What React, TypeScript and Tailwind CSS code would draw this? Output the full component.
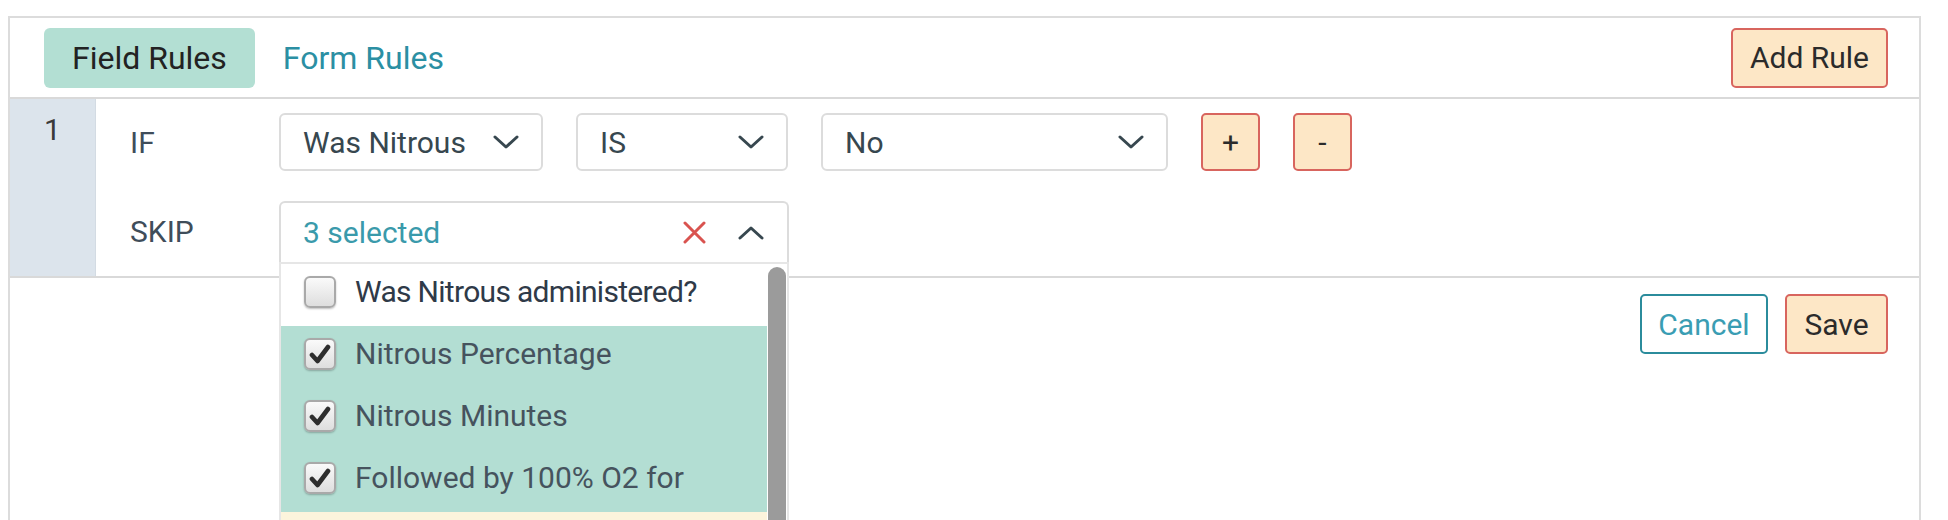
import React from "react";

function ChevronDown() {
  return (
    <svg width="26" height="14" viewBox="0 0 26 14" fill="none">
      <path d="M2 2L13 12L24 2" stroke="#37474f" strokeWidth="3" strokeLinecap="round" strokeLinejoin="round" />
    </svg>
  );
}

function ChevronUp() {
  return (
    <svg width="26" height="14" viewBox="0 0 26 14" fill="none">
      <path d="M2 12L13 2L24 12" stroke="#37474f" strokeWidth="3" strokeLinecap="round" strokeLinejoin="round" />
    </svg>
  );
}

function XIcon() {
  return (
    <svg width="23" height="23" viewBox="0 0 23 23" fill="none">
      <path d="M2 2L21 21M21 2L2 21" stroke="#d9534f" strokeWidth="3" strokeLinecap="round" />
    </svg>
  );
}

function Check() {
  return (
    <svg width="22" height="20" viewBox="0 0 22 20" fill="none">
      <path d="M3 11L8.5 17L19 3" stroke="#2e2e2e" strokeWidth="4.6" strokeLinecap="round" strokeLinejoin="round" />
    </svg>
  );
}

function Checkbox({ checked }: { checked: boolean }) {
  return (
    <div className="flex h-[32px] w-[32px] shrink-0 items-center justify-center rounded-[6px] border-2 border-[#a9a9a9] bg-gradient-to-b from-[#fafafa] to-[#dedede] shadow-[0_1px_2px_rgba(0,0,0,0.25)]">
      {checked && <Check />}
    </div>
  );
}

function Select({ label, w }: { label: string; w: string }) {
  return (
    <div
      className={`flex h-[58px] ${w} items-center justify-between rounded-[6px] border-2 border-[#dcdcdc] bg-white px-[22px] text-[30px] text-[#37474f]`}
    >
      <span>{label}</span>
      <ChevronDown />
    </div>
  );
}

function PeachButton({ children, w }: { children: React.ReactNode; w: string }) {
  return (
    <div
      className={`flex h-[60px] ${w} items-center justify-center rounded-[5px] border-2 border-[#d8655e] bg-[#fde7c6] text-[30px] text-[#2b2b2b]`}
    >
      {children}
    </div>
  );
}

export default function App() {
  const items = [
    { label: "Was Nitrous administered?", checked: false, bg: "bg-white", color: "text-[#2f3a48] tracking-[-0.7px]" },
    { label: "Nitrous Percentage", checked: true, bg: "bg-[#b3ded3]", color: "text-[#46535e]" },
    { label: "Nitrous Minutes", checked: true, bg: "bg-[#b3ded3]", color: "text-[#46535e]" },
    { label: "Followed by 100% O2 for", checked: true, bg: "bg-[#b3ded3]", color: "text-[#46535e]" },
    { label: "", checked: false, bg: "bg-[#fcf4dc]", color: "text-[#46535e]" },
  ];

  return (
    <div className="min-h-[520px] overflow-hidden bg-white font-['Roboto',sans-serif] pt-[16px] pl-[8px]">
      <div className="h-[560px] w-[1913px] border-2 border-[#dcdcdc]">
        {/* Header */}
        <div className="flex h-[81px] items-center justify-between border-b-2 border-[#d9d9d9] pl-[34px] pr-[31px]">
          <div className="flex items-center">
            <div className="flex h-[60px] items-center rounded-[6px] bg-[#b3dfd3] px-[28px] text-[32px] text-[#222]">
              Field Rules
            </div>
            <div className="flex h-[60px] items-center px-[28px] text-[32px] text-[#2b8fa3]">Form Rules</div>
          </div>
          <PeachButton w="w-[157px]">Add Rule</PeachButton>
        </div>

        {/* Rule row */}
        <div className="flex border-b-2 border-[#d9d9d9]">
          <div className="flex w-[86px] justify-center border-r border-[#d3dbe3] bg-[#dce4ec] pt-[13px] text-[30px] leading-[36px] text-[#3a3a3a]">
            1
          </div>
          <div className="flex flex-col gap-[30px] pl-[34px] pt-[14px] pb-[14px]">
            <div className="flex items-center gap-[33px]">
              <div className="w-[116px] text-[30px] text-[#3f4d5a]">IF</div>
              <Select label="Was Nitrous" w="w-[264px]" />
              <Select label="IS" w="w-[212px]" />
              <Select label="No" w="w-[347px]" />
              <div className="flex h-[58px] w-[59px] items-center justify-center rounded-[5px] border-2 border-[#d8655e] bg-[#fde7c6] text-[30px] text-[#2b2b2b]">
                +
              </div>
              <div className="flex h-[58px] w-[59px] items-center justify-center rounded-[5px] border-2 border-[#d8655e] bg-[#fde7c6] text-[30px] text-[#2b2b2b]">
                -
              </div>
            </div>
            <div className="flex items-center gap-[33px]">
              <div className="w-[116px] text-[30px] text-[#3f4d5a]">SKIP</div>
              <div className="relative w-[510px]">
                <div className="flex h-[61px] items-center justify-between rounded-t-[6px] border-2 border-b-0 border-[#dcdcdc] bg-white pl-[22px] pr-[23px] text-[30px] text-[#3a9aab]">
                  <span>3 selected</span>
                  <div className="flex items-center gap-[32px]">
                    <XIcon />
                    <ChevronUp />
                  </div>
                </div>
                <div className="absolute left-0 top-[61px] z-10 flex h-[320px] w-[510px] border-x-2 border-t-2 border-[#e6e6e6] bg-white">
                  <div className="flex w-[486px] flex-col">
                    {items.map((it, i) => (
                      <div
                        key={i}
                        className={`flex h-[62px] shrink-0 items-center gap-[19px] pl-[23px] pb-[7px] ${it.bg} text-[30px] ${it.color}`}
                      >
                        {it.label && <Checkbox checked={it.checked} />}
                        {it.label && <span>{it.label}</span>}
                      </div>
                    ))}
                  </div>
                  <div className="flex flex-1 justify-center pt-[3px]">
                    <div className="h-[400px] w-[18px] rounded-full bg-[#9b9b9b]" />
                  </div>
                </div>
              </div>
            </div>
          </div>
        </div>

        {/* Footer */}
        <div className="flex justify-end gap-[17px] pr-[31px] pt-[16px]">
          <div className="flex h-[60px] w-[128px] items-center justify-center rounded-[5px] border-2 border-[#2b8c9c] bg-white text-[30px] text-[#3a9db3]">
            Cancel
          </div>
          <PeachButton w="w-[103px]">Save</PeachButton>
        </div>
      </div>
    </div>
  );
}
